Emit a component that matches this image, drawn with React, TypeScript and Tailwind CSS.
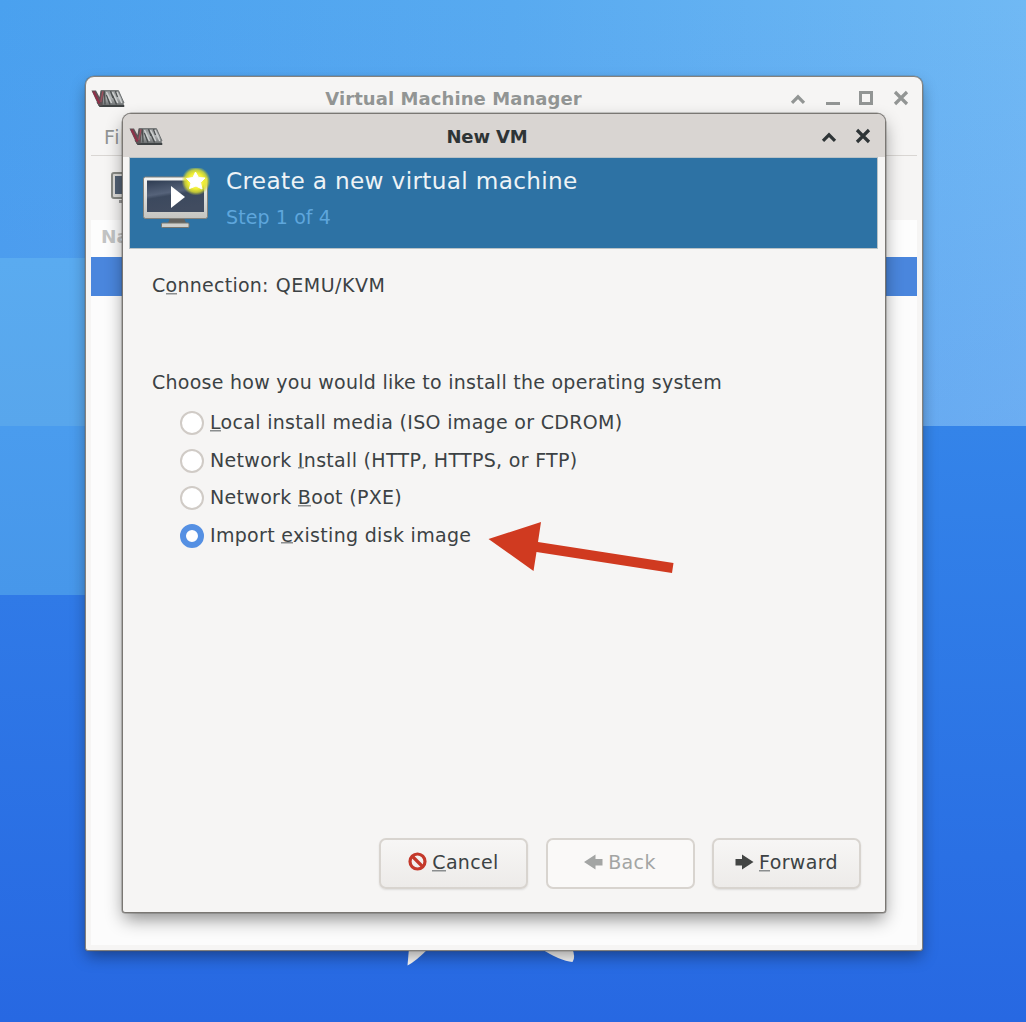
import React from "react";

function VmmLogo() {
  return (
    <svg width="34" height="20" viewBox="0 0 34 20" className="mt-[2px]">
      <defs>
        <linearGradient id="metal" x1="0" y1="0" x2="0" y2="1">
          <stop offset="0" stopColor="#8b8e8f" />
          <stop offset="0.5" stopColor="#b3b6b7" />
          <stop offset="1" stopColor="#6d7172" />
        </linearGradient>
      </defs>
      <path d="M6 13 L10 16.500 H33 V17.500 H8.500Z" fill="#3f4344" stroke="#3f4344" />
      <path d="M10 1.500 H27.500 L32.800 13.500 V16 H9Z" fill="url(#metal)" />
      <path d="M0.500 1.500 H5 L8.500 8 L9.500 1.500 H13.500 L11.500 16.500 H7.500Z" fill="#5d5557" />
      <path d="M2.500 2.500 L8.500 14.500" stroke="#8f3048" strokeWidth="2.200" />
      <path d="M12 2 L9.800 13" stroke="#a0505f" strokeWidth="1.300" />
      <path d="M13.500 2 L14 15.500 M15.500 6 L19 15.500 M19.500 2 L22 9 M21.500 6 L25.500 15.500 M24.500 2 L26.500 8" stroke="#4c5051" strokeWidth="1.400" />
      <path d="M15.500 3 L20.500 14 M21.500 3 L26.800 14 M26 3 L30.800 14" stroke="#cfd1d1" strokeWidth="1.400" />
      <path d="M10 1.700 H27.500 M27.500 1.700 L33 14" stroke="#6a6e6f" strokeWidth="1" />
    </svg>
  );
}

function MonitorIcon() {
  return (
    <svg width="70" height="64" viewBox="0 0 70 64" className="mt-[2px] shrink-0">
      <defs>
        <linearGradient id="bezel" x1="0" y1="0" x2="0" y2="1">
          <stop offset="0" stopColor="#f6f6f4" />
          <stop offset="1" stopColor="#c4c4c0" />
        </linearGradient>
        <linearGradient id="screen" x1="0" y1="0" x2="0.3" y2="1">
          <stop offset="0" stopColor="#2e3c52" />
          <stop offset="0.45" stopColor="#56637a" />
          <stop offset="0.55" stopColor="#3c495e" />
          <stop offset="1" stopColor="#414c60" />
        </linearGradient>
        <radialGradient id="glow">
          <stop offset="0" stopColor="#ffffc0" />
          <stop offset="0.55" stopColor="#f0ee30" />
          <stop offset="0.78" stopColor="#dde030" stopOpacity="0.8" />
          <stop offset="1" stopColor="#c0d040" stopOpacity="0" />
        </radialGradient>
      </defs>
      <path d="M28 50 H42 L44 55 H26Z" fill="#62625f" />
      <rect x="19.500" y="55" width="27.500" height="4.500" rx="1" fill="#d0d0cc" stroke="#77766f" />
      <rect x="1.500" y="9" width="64" height="41.500" rx="2" fill="url(#bezel)" stroke="#84827c" />
      <rect x="5" y="12.500" width="57" height="31.500" fill="url(#screen)" />
      <path d="M29 18 L43 29 L29 40Z" fill="#fff" />
      <circle cx="54" cy="13" r="14.500" fill="url(#glow)" />
      <path
        d="M53.500 4 L56.500 9.500 L63 10 L58.500 14.500 L60 21 L54 18 L47.500 20.500 L49 15 L44.500 10.500 L51 9.500Z"
        fill="#fff"
        stroke="#fff"
        strokeLinejoin="round"
      />
    </svg>
  );
}

function ShadeIcon() {
  return (
    <svg width="16" height="16" viewBox="0 0 16 16" fill="none" stroke="currentColor" strokeWidth="3.200">
      <path d="M2 12.800 L8 6.800 L14 12.800" />
    </svg>
  );
}

function CloseIcon() {
  return (
    <svg width="16" height="16" viewBox="0 0 16 16" fill="none" stroke="currentColor" strokeWidth="3.200">
      <path d="M2 2 L14 14 M14 2 L2 14" />
    </svg>
  );
}

function Mnemonic({ before = "", letter, after }: { before?: string; letter: string; after: string }) {
  return (
    <span className="whitespace-pre">
      {before}
      <span className="bg-[linear-gradient(#8b8e8f,#8b8e8f)] bg-[length:100%_1.5px] bg-[position:0_calc(100%-2px)] bg-no-repeat">{letter}</span>
      {after}
    </span>
  );
}

const options = [
  { before: "", letter: "L", after: "ocal install media (ISO image or CDROM)", checked: false },
  { before: "Network ", letter: "I", after: "nstall (HTTP, HTTPS, or FTP)", checked: false },
  { before: "Network ", letter: "B", after: "oot (PXE)", checked: false },
  { before: "Import ", letter: "e", after: "xisting disk image", checked: true },
];

function Backdrop() {
  return (
    <div className="absolute inset-0 bg-[linear-gradient(to_bottom,rgba(90,130,235,0)_0px,rgba(90,130,235,0.22)_426px),linear-gradient(90deg,#4aa1ef,#58aaf0_50%,#70b9f4)]">
      <div className="flex h-full justify-between">
        <div className="flex w-[513px] flex-col pt-[258px]">
          <div className="h-[168px] bg-linear-to-b from-[#5aabf0] to-[#58a6ec]" />
          <div className="h-[169px] bg-linear-to-b from-[#4a9cee] to-[#4797ea]" />
          <div className="flex-1 bg-linear-to-b from-[#307ae7] to-[#2768e2]" />
        </div>
        <div className="flex w-[513px] flex-col pt-[426px]">
          <div className="flex-1 bg-linear-to-b from-[#3484e9] to-[#2768e2]" />
        </div>
      </div>
      <svg className="absolute left-[400px] top-[940px]" width="190" height="34" viewBox="0 0 190 34">
        <path d="M9 8 L7.500 25.500 Q15 22 29 8Z" fill="#fbfaf9" />
        <path d="M140 8 Q160 21 172.500 22 Q176 17 172 8Z" fill="#fbfaf9" />
      </svg>
    </div>
  );
}

function ManagerWindow() {
  return (
    <div className="absolute left-[85px] top-[76px] flex h-[875px] w-[838px] flex-col rounded-t-[9px] rounded-b-[3px] border border-[#85827d] bg-[#f6f5f4] px-[5px] pb-[5px] shadow-[0_0_0_0.5px_rgba(90,85,80,0.4),0_7px_16px_-2px_rgba(0,0,0,0.4)]">
      <div className="flex h-[41px] items-center pt-px text-[#929594]">
        <VmmLogo />
        <div className="flex-1 pr-[8px] pt-px text-center text-[18px] font-bold tracking-[0.080px]">Virtual Machine Manager</div>
        <div className="flex w-[127px] items-center justify-between pr-[8px]">
          <ShadeIcon />
          <span className="mt-[10px] h-[3px] w-[14px] bg-current" />
          <span className="size-[14px] border-[3px] border-current" />
          <CloseIcon />
        </div>
      </div>
      <div className="flex h-[38px] items-center border-b border-[#d9d6d3] pl-[13px] pt-[2px] text-[19px] tracking-[0.800px] text-[#929594]">File</div>
      <div className="flex h-[64px] items-start pl-[20px] pt-[16px]">
        <svg width="40" height="34" viewBox="0 0 40 34">
          <rect x="1" y="1" width="38" height="25" rx="2" fill="#deddda" stroke="#888a85" strokeWidth="2" />
          <rect x="4" y="4" width="32" height="18" fill="#526174" />
          <rect x="8" y="28" width="24" height="3" fill="#999" />
        </svg>
      </div>
      <div className="flex h-[37px] items-center bg-[#fdfdfd] pb-[4px] pl-[10px] text-[18.500px] font-bold text-[#c3c4c4]">Name</div>
      <div className="h-[39px] bg-[#4a86dd]" />
      <div className="flex-1 bg-[#fcfcfc]" />
    </div>
  );
}

function BannerHeader() {
  return (
    <div className="ml-[6px] mr-[7px] flex h-[92px] border border-[#b9c2c6] bg-[#2d72a4] pl-[12px] pt-[8px]">
      <MonitorIcon />
      <div className="pl-[14px]">
        <div className="mt-px text-[23.200px] leading-[28px] tracking-[0.330px] text-[#eef3f6]">Create a new virtual machine</div>
        <div className="mt-[10px] text-[19px] leading-[24px] tracking-[0.100px] text-[#5ea6dc]">Step 1 of 4</div>
      </div>
    </div>
  );
}

const buttonBase =
  "flex h-[51px] w-[149px] items-center justify-center gap-[5px] rounded-[7px] border-2 border-[#d8d4cf] pb-[2px]";

function NewVmDialog() {
  return (
    <div className="absolute left-[122px] top-[113px] flex h-[800px] w-[764px] flex-col rounded-t-[9px] rounded-b-[3px] border border-[#7a7773] bg-[#f6f5f4] shadow-[0_0_0_0.5px_rgba(70,68,65,0.5),0_8px_18px_-2px_rgba(0,0,0,0.45)]">
      <div className="flex h-[43px] shrink-0 items-center rounded-t-[8px] bg-[#d9d5d2] px-[6px] pt-px text-[#2e3436]">
        <VmmLogo />
        <div className="flex-1 pr-[10px] text-center text-[18px] font-bold tracking-[-0.150px]">New VM</div>
        <div className="flex w-[58px] justify-between pr-[8px]">
          <ShadeIcon />
          <CloseIcon />
        </div>
      </div>
      <BannerHeader />
      <div className="flex flex-1 flex-col px-[29px] text-[19px] leading-[24px] tracking-[0.260px] text-[#3c4244]">
        <div className="mt-[24px] flex gap-[7px]">
          <Mnemonic before="C" letter="o" after="nnection:" />
          <span className="tracking-[0.500px]">QEMU/KVM</span>
        </div>
        <div className="mt-[73px]">Choose how you would like to install the operating system</div>
        <div className="mt-[16px] flex flex-col gap-[13.500px] pl-[28px] tracking-[0.310px]">
          {options.map((o) => (
            <label key={o.letter} className="flex h-[24px] items-center gap-[6px]">
              {o.checked ? (
                <span className="mt-[2px] size-[24px] rounded-full border-[6px] border-[#5590e3] bg-white" />
              ) : (
                <span className="mt-[2px] size-[24px] rounded-full border-2 border-[#d0cbc6] bg-white" />
              )}
              <Mnemonic before={o.before} letter={o.letter} after={o.after} />
            </label>
          ))}
        </div>
      </div>
      <div className="mb-[23px] mr-[24px] flex justify-end gap-[17.500px] text-[19px] tracking-[0.350px] text-[#3c4244]">
        <button className={buttonBase + " bg-linear-to-b from-[#f7f6f5] to-[#edebe9] shadow-[0_1px_2px_rgba(0,0,0,0.1)]"}>
          <svg className="mb-[2px]" width="19" height="19" viewBox="0 0 19 19" fill="none">
            <circle cx="9.500" cy="9.500" r="7.500" stroke="#c4392b" strokeWidth="3.200" />
            <path d="M4.500 4.500 L14.500 14.500" stroke="#c4392b" strokeWidth="3.200" />
          </svg>
          <Mnemonic letter="C" after="ancel" />
        </button>
        <button className={buttonBase + " bg-[#faf9f8] text-[#a3a5a4]"}>
          <svg className="mb-[2px]" width="19" height="16" viewBox="0 0 19 16" fill="currentColor">
            <path d="M0 8 L11.500 0.500 V5 H18.500 V11.500 H11.500 V15.500Z" />
          </svg>
          <span>Back</span>
        </button>
        <button className={buttonBase + " bg-linear-to-b from-[#f7f6f5] to-[#edebe9] shadow-[0_1px_2px_rgba(0,0,0,0.1)]"}>
          <svg className="mb-[2px]" width="19" height="16" viewBox="0 0 19 16" fill="#434544">
            <path d="M18.500 8 L7 0.500 V5 H0.500 V11.500 H7 V15.500Z" />
          </svg>
          <Mnemonic letter="F" after="orward" />
        </button>
      </div>
      <svg className="absolute left-[363px] top-[406px]" width="192" height="56" viewBox="0 0 192 56">
        <path d="M2.500 19 L55 2 L52 22 L187.500 43 L186 53 L50.500 32 L47.500 51Z" fill="#d03a20" />
      </svg>
    </div>
  );
}

export default function App() {
  return (
    <main className="relative h-[1022px] w-[1026px] overflow-hidden font-['DejaVu_Sans',sans-serif]">
      <Backdrop />
      <ManagerWindow />
      <NewVmDialog />
    </main>
  );
}
